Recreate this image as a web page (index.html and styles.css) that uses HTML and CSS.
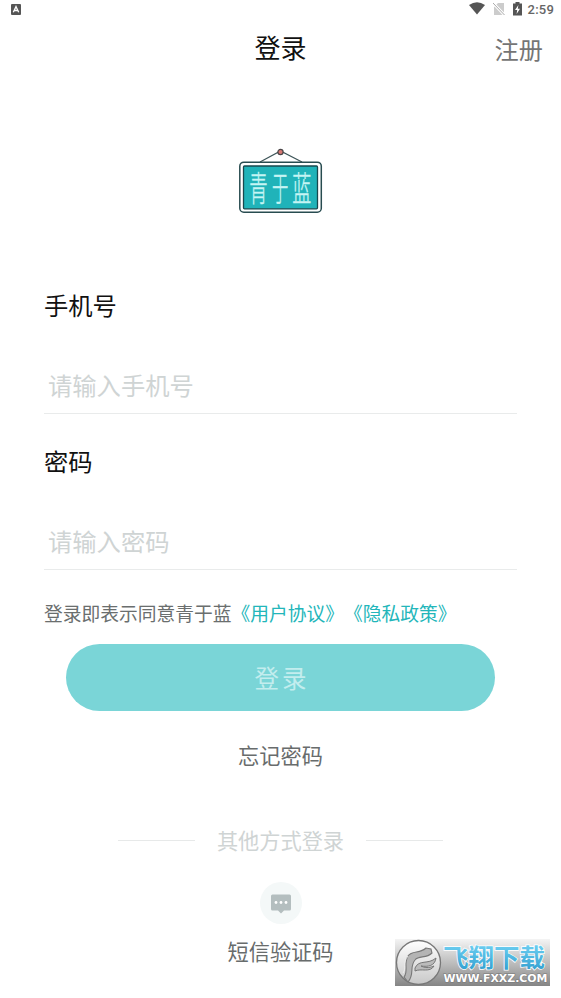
FILE: index.html
```html
<!DOCTYPE html>
<html lang="zh-CN">
<head>
<meta charset="utf-8">
<title>登录</title>
<link rel="stylesheet" href="styles.css">
</head>
<body>
<div class="screen">
  <div class="status">
    <svg class="status-app" width="10" height="11" viewBox="0 0 10 11"><rect width="10" height="11" rx="1" fill="#555"/><path d="M2.3 8.3L5 2.6l2.7 5.7M3.4 6.5h3.2" fill="none" stroke="#fff" stroke-width="1.3"/></svg>
    <div class="status-right">
      <svg width="18" height="14" viewBox="0 0 18 14"><path d="M1 3Q9-2.500 17 3L9 12.600z" fill="#555"/></svg>
      <svg width="12" height="13" viewBox="0 0 12 13"><path d="M5 0h6v12H1V4z" fill="#ccc"/><path d="M0 0l11.500 12" stroke="#fff" stroke-width="2.800"/><path d="M0 0l11.500 12" stroke="#aaa"/></svg>
      <svg width="9" height="14" viewBox="0 0 9 14"><path d="M0 1.500h2.500V0h4v1.500H9V13.500H0z" fill="#555"/><path d="M5.400 3L2 8h2.200l-.6 4L7 6.800H4.800z" fill="#fff"/></svg>
      <span class="clock">2:59</span>
    </div>
  </div>
  <header class="header">
    <span></span>
    <h1>登录</h1>
    <a class="register">注册</a>
  </header>
  <div class="logo">
    <svg width="84" height="66" viewBox="0 0 84 66">
      <path d="M21 14L41.500 3L63 14" fill="none" stroke="#3d5558" stroke-width="1.200"/>
      <circle cx="41.500" cy="4" r="2.600" fill="#d77873" stroke="#4b4547" stroke-width="1.200"/>
      <rect x=".8" y="14.200" width="81.500" height="50" rx="4" fill="#fff" stroke="#284c50" stroke-width="1.500"/>
      <rect x="4.500" y="18" width="74" height="42.800" rx="1" fill="#20b3b9" stroke="#17484e" stroke-width="1.300"/>
      <g class="logo-text">
        <text transform="translate(10.200 52.500) scale(.54 1)">青</text>
        <text transform="translate(33 52.500) scale(.48 1)">于</text>
        <text transform="translate(53.200 52.500) scale(.56 1)">蓝</text>
      </g>
    </svg>
  </div>
  <main class="form">
    <label>手机号</label>
    <div class="field">请输入手机号</div>
    <label class="second">密码</label>
    <div class="field">请输入密码</div>
    <p class="agreement">登录即表示同意青于蓝<a>《用户协议》</a><a>《隐私政策》</a></p>
    <div class="submit">登录</div>
  </main>
  <div class="forgot">忘记密码</div>
  <div class="other"><i></i><span>其他方式登录</span><i></i></div>
  <div class="sms">
    <svg width="42" height="42" viewBox="0 0 42 42"><circle cx="21" cy="21" r="21" fill="#f4f8f8"/><path d="M12.500 12.500h17q1.500 0 1.500 1.500v13q0 1.500-1.500 1.500H24l-3 3-3-3h-5.500q-1.500 0-1.500-1.500V14q0-1.500 1.500-1.500z" fill="#b4bebf"/><g fill="#fff"><circle cx="16" cy="20.500" r="1.400"/><circle cx="21" cy="20.500" r="1.400"/><circle cx="26" cy="20.500" r="1.400"/></g></svg>
    <span>短信验证码</span>
  </div>
  <div class="watermark">
    <svg width="155" height="47" viewBox="0 0 155 47">
      <defs>
        <linearGradient id="bar" x1="0" y1="0" x2="0" y2="1"><stop offset="0" stop-color="#f4f4f4"/><stop offset=".5" stop-color="#bebebe"/><stop offset="1" stop-color="#858585"/></linearGradient>
        <linearGradient id="disc" x1="0" y1="0" x2="0" y2="1"><stop offset="0" stop-color="#fff"/><stop offset="1" stop-color="#c8c8c8"/></linearGradient>
        <linearGradient id="name" x1="0" y1="0" x2="0" y2="1"><stop offset=".2" stop-color="#6bcdf0"/><stop offset=".9" stop-color="#329fd0"/></linearGradient>
      </defs>
      <rect width="155" height="47" fill="url(#bar)"/>
      <circle cx="23.500" cy="23.500" r="22" fill="url(#disc)" stroke="#777" stroke-width="1.300"/>
      <path d="M9 38C14 32 8 25 13 17C17 11 25 15 31 9L36 10L37 14C31 20 24 16 20 21C14 28 20 35 13 43z" fill="#b4b4b4" stroke="#777" stroke-width="1.100"/>
      <path d="M20 29C24 20 33 26 41 19C40 27 33 28 26 27C32 30 36 28 39 27C35 34 26 29 20 32z" fill="#bbb" stroke="#777"/>
      <path d="M8 34C12 29 7 24 13 17" fill="none" stroke="#eee"/>
      <text class="wm-name" x="48" y="28.300" textLength="102" lengthAdjust="spacingAndGlyphs">飞翔下载</text>
      <text class="wm-url" x="48.500" y="43.300" textLength="104" lengthAdjust="spacingAndGlyphs">WWW.FXXZ.COM</text>
    </svg>
  </div>
</div>
</body>
</html>
```
FILE: styles.css
```css
* { box-sizing: border-box; }
body { margin: 0; background: #fff; font-family: "Noto Sans CJK SC", sans-serif; color: #111; }
svg { display: block; flex: none; }
.screen { position: relative; width: 561px; height: 998px; overflow: hidden; display: flex; flex-direction: column; }
.status { height: 20px; padding: 0 7px 0 11px; display: flex; align-items: center; justify-content: space-between; }
.status-app { margin-bottom: 1px; }
.status-right { display: flex; align-items: center; gap: 6px; height: 18px; margin-top: -2px; }
.status-right svg:nth-child(1) { margin-right: 1px; }
.status-right svg:nth-child(3) { margin-left: 2px; }
.clock { font: 500 13px/18px Roboto, sans-serif; color: #666; letter-spacing: .2px; margin-top: 2px; }
.header { height: 54px; display: grid; grid-template-columns: 1fr auto 1fr; align-items: center; padding-right: 18px; padding-left: 18px; }
h1 { margin: 0; font-size: 26px; font-weight: 400; line-height: 54px; }
.register { justify-self: end; font-size: 24.2px; line-height: 54px; margin-top: 2px; margin-bottom: -2px; color: #757575; }
.logo { margin-top: 74px; display: flex; justify-content: center; height: 66px; }
.logo-text text { font-size: 34px; font-weight: 300; fill: #c5f5f4; stroke: #c5f5f4; stroke-width: .5px; }
.form { padding: 0 44px; margin-top: 71px; }
label { display: block; font-size: 24.3px; line-height: 40px; }
.field { height: 89px; padding: 40px 4px 0; border-bottom: 1px solid #e9ebeb; font-size: 24.3px; line-height: 40px; color: #cfd4d4; }
.second { margin-top: 27px; }
.agreement { margin: 28px 0 0; font-size: 18.75px; line-height: 30px; color: #6a6e6e; white-space: nowrap; text-spacing-trim: space-all; }
.agreement a { color: #23b6ba; }
.submit { height: 67px; margin: 16px 22px 0; padding-left: 3px; border-radius: 34px; background: #7ad5d7; color: #c3edee; font-size: 24.5px; line-height: 68px; letter-spacing: 3px; text-align: center; }
.forgot { margin-top: 29px; font-size: 21.2px; line-height: 30px; text-align: center; color: #686c6c; }
.other { margin-top: 55px; display: flex; align-items: center; justify-content: center; gap: 22px; font-size: 21.2px; line-height: 30px; color: #cfd4d4; }
.other i { width: 77px; height: 1px; background: #e7e9e9; }
.sms { margin-top: 27px; display: flex; flex-direction: column; align-items: center; gap: 12px; font-size: 21.2px; line-height: 30px; color: #686c6c; }
.watermark { position: absolute; right: 11px; bottom: 12px; }
.wm-name { font-size: 25px; font-weight: 700; fill: url(#name); stroke: #fff; stroke-width: 1.5px; paint-order: stroke; }
.wm-url { font: 700 10px "DejaVu Sans", sans-serif; fill: #fff; stroke: #777; stroke-width: 1px; paint-order: stroke; }
```
